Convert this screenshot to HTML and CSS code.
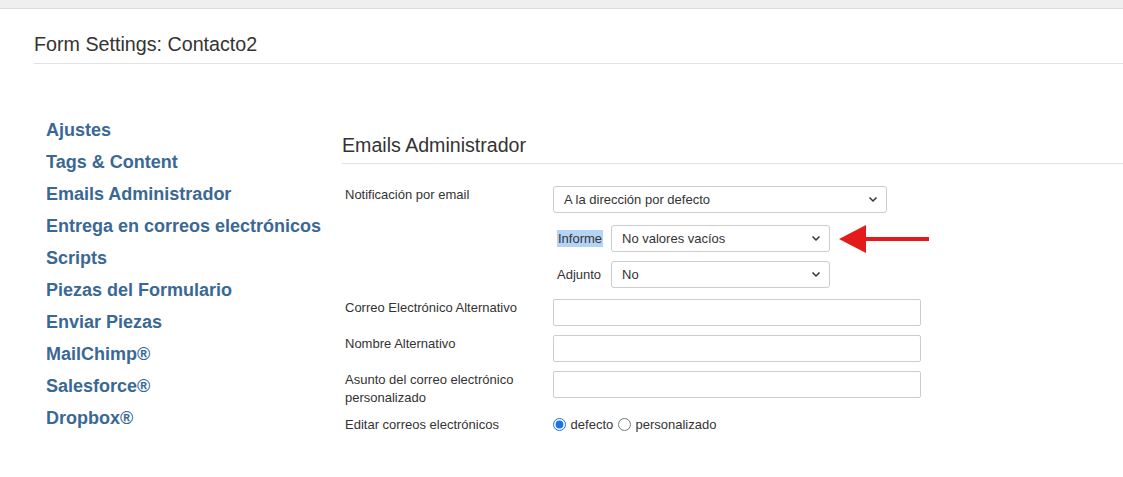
FILE: index.html
```
<!DOCTYPE html>
<html lang="es">
<head>
    <meta charset="UTF-8">
    <meta name="viewport" content="width=device-width, initial-scale=1.0">
    <title>Form Settings: Contacto2</title>
    <link rel="stylesheet" href="styles.css">
</head>
<body>
<div class="top-bar"></div>

<div class="page-header">
    <h1>Form Settings: Contacto2</h1>
</div>

<div class="content">
    <ul class="side-nav">
        <li><a href="#">Ajustes</a></li>
        <li><a href="#">Tags &amp; Content</a></li>
        <li><a href="#">Emails Administrador</a></li>
        <li><a href="#">Entrega en correos electrónicos</a></li>
        <li><a href="#">Scripts</a></li>
        <li><a href="#">Piezas del Formulario</a></li>
        <li><a href="#">Enviar Piezas</a></li>
        <li><a href="#">MailChimp®</a></li>
        <li><a href="#">Salesforce®</a></li>
        <li><a href="#">Dropbox®</a></li>
    </ul>

    <div class="main">
        <h2>Emails Administrador</h2>

        <div class="form-row">
            <label class="form-label">Notificación por email</label>
            <div class="form-control-group">
                <div class="select select-wide">
                    <span>A la dirección por defecto</span>
                    <svg class="chevron" width="10" height="7" viewBox="0 0 10 7"><path d="M1.5 1.5 L5 5 L8.5 1.5" fill="none" stroke="#333" stroke-width="1.5"/></svg>
                </div>
                <div class="sub-row sub-row-first">
                    <label class="sub-label"><span class="highlight">Informe</span></label>
                    <div class="select select-narrow">
                        <span>No valores vacíos</span>
                        <svg class="chevron" width="10" height="7" viewBox="0 0 10 7"><path d="M1.5 1.5 L5 5 L8.5 1.5" fill="none" stroke="#333" stroke-width="1.5"/></svg>
                    </div>
                    <svg class="arrow" width="92" height="30" viewBox="0 0 92 30"><polygon points="0,15 27,1 27,29" fill="#e41b1b"/><rect x="26" y="13" width="64" height="4" fill="#e41b1b"/></svg>
                </div>
                <div class="sub-row">
                    <label class="sub-label">Adjunto</label>
                    <div class="select select-narrow">
                        <span>No</span>
                        <svg class="chevron" width="10" height="7" viewBox="0 0 10 7"><path d="M1.5 1.5 L5 5 L8.5 1.5" fill="none" stroke="#333" stroke-width="1.5"/></svg>
                    </div>
                </div>
            </div>
        </div>

        <div class="form-row">
            <label class="form-label">Correo Electrónico Alternativo</label>
            <input type="text" class="text-input">
        </div>

        <div class="form-row">
            <label class="form-label">Nombre Alternativo</label>
            <input type="text" class="text-input">
        </div>

        <div class="form-row">
            <label class="form-label">Asunto del correo electrónico personalizado</label>
            <input type="text" class="text-input">
        </div>

        <div class="form-row radio-row">
            <label class="form-label">Editar correos electrónicos</label>
            <div class="radios">
                <label><input type="radio" name="edit" checked> defecto</label>
                <label><input type="radio" name="edit"> personalizado</label>
            </div>
        </div>
    </div>
</div>
</body>
</html>
```

FILE: styles.css
```
body {
    margin: 0;
    font-family: "Liberation Sans", Arial, sans-serif;
    color: #333;
    background-color: #fff;
}
.top-bar {
    height: 8px;
    background-color: #efefef;
    border-bottom: 1px solid #dcdcdc;
}
.page-header {
    margin-left: 34px;
    padding: 25px 0 8px;
    border-bottom: 1px solid #e3e3e3;
}
h1 {
    margin: 0;
    font-size: 19.7px;
    line-height: 21px;
    font-weight: normal;
    color: #333;
}
.content {
    display: flex;
    padding-top: 50px;
}
.side-nav {
    list-style-type: none;
    margin: 0;
    padding: 0 0 0 46px;
    width: 342px;
    flex-shrink: 0;
    box-sizing: border-box;
}
.side-nav li {
    font-size: 18px;
    line-height: 32px;
}
.side-nav a {
    color: #3a6895;
    font-weight: bold;
    text-decoration: none;
    white-space: nowrap;
}
.main {
    flex: 1;
    padding-top: 20px;
}
h2 {
    margin: 0 0 22px;
    padding-bottom: 7px;
    font-size: 19.6px;
    line-height: 22px;
    font-weight: normal;
    color: #333;
    border-bottom: 1px solid #e3e3e3;
}
.form-row {
    display: flex;
    align-items: flex-start;
    padding-left: 3px;
    margin-bottom: 9px;
    font-size: 13px;
    line-height: 18px;
}
.form-row:first-of-type {
    margin-bottom: 11px;
}
.form-label {
    width: 208px;
    padding-right: 22px;
    box-sizing: border-box;
}
.form-control-group {
    display: flex;
    flex-direction: column;
}
.select {
    display: flex;
    align-items: center;
    justify-content: space-between;
    height: 27px;
    padding: 0 8px 0 10px;
    box-sizing: border-box;
    border: 1px solid #ccc;
    border-radius: 3px;
    background-color: #fff;
    color: #333;
}
.select-wide {
    width: 334px;
}
.select-narrow {
    width: 219px;
}
.sub-row {
    display: flex;
    align-items: center;
    margin-top: 9px;
}
.sub-row-first {
    margin-top: 12px;
}
.sub-label {
    width: 58px;
    padding-left: 4px;
    box-sizing: border-box;
}
.highlight {
    background-color: #b4d3f5;
    padding: 1px 1px;
}
.arrow {
    margin: -2px 0 -2px 9px;
}
.text-input {
    width: 368px;
    height: 27px;
    box-sizing: border-box;
    border: 1px solid #ccc;
    border-radius: 2px;
    margin: 0;
}
.radio-row {
    margin-top: 8px;
}
.radios label {
    margin-right: 1px;
}
.radios input {
    margin: 0 1px 0 0;
    width: 13px;
    height: 13px;
    vertical-align: -2px;
    accent-color: #1a73e8;
}
```
